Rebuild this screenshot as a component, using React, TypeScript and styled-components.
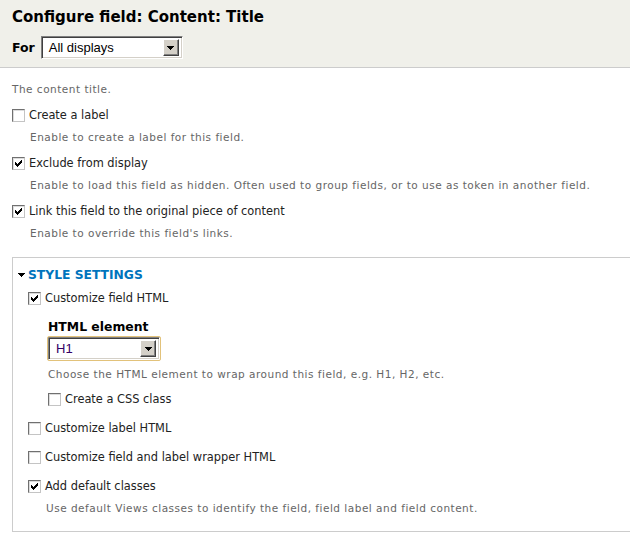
import * as React from "react";
import styled, { createGlobalStyle } from "styled-components";

const GlobalStyle = createGlobalStyle`
  html, body {
    margin: 0;
    padding: 0;
    background: #fff;
    overflow: hidden;
  }
  body {
    font-family: "DejaVu Sans", Verdana, sans-serif;
    color: #222;
  }
`;

const Page = styled.div`
  width: 630px;
  height: 543px;
  overflow: hidden;
`;

const Header = styled.div`
  background: #f0f0ea;
  border-bottom: 1px solid #cccccc;
  padding: 8px 12px 7px;
  height: 52px;
`;

const Title = styled.h1`
  margin: 0;
  font-size: 15px;
  line-height: 18px;
  font-weight: bold;
  color: #000;
`;

const ForRow = styled.div`
  display: flex;
  align-items: center;
  gap: 6px;
  margin-top: 10px;
`;

const ForLabel = styled.span`
  font-size: 12.5px;
  font-weight: bold;
  color: #000;
`;

const SelectBox = styled.div<{ $width: number; $focused?: boolean }>`
  display: flex;
  align-items: center;
  box-sizing: border-box;
  width: ${(p) => p.$width}px;
  height: 23px;
  background: #fff;
  border: 1px solid;
  border-color: #808080 #ffffff #ffffff #808080;
  box-shadow: inset 1px 1px 0 #404040, inset -1px -1px 0 #d4d0c8;
  padding: 2px 3px 2px 2px;
  ${(p) =>
    p.$focused &&
    `
    outline: 1px solid #e2c27a;
    outline-offset: 0;
    border-radius: 1px;
  `}
`;

const SelectValue = styled.span<{ $color?: string }>`
  flex: 1;
  padding-left: 5px;
  font-family: "Liberation Sans", Arial, sans-serif;
  font-size: 13px;
  color: ${(p) => p.$color || "#000"};
  white-space: nowrap;
`;

const SelectButton = styled.span`
  display: flex;
  align-items: center;
  justify-content: center;
  box-sizing: border-box;
  width: 16px;
  height: 17px;
  background: #d4d0c8;
  border: 1px solid;
  border-color: #ffffff #404040 #404040 #ffffff;
  box-shadow: inset -1px -1px 0 #808080;
`;

const Content = styled.div`
  padding: 13px 0 0 12px;
`;

const Intro = styled.div`
  font-size: 10.5px;
  letter-spacing: 0.5px;
  line-height: 16px;
  color: #666;
`;

const FormItem = styled.div<{ $gap?: number }>`
  margin-top: ${(p) => (p.$gap ?? 10)}px;
`;

const CheckRow = styled.label`
  display: flex;
  align-items: center;
  gap: 4px;
  font-size: 11.4px;
  line-height: 16px;
  color: #222;
  white-space: nowrap;
`;

const Box = styled.span`
  display: inline-block;
  box-sizing: border-box;
  width: 13px;
  height: 13px;
  flex: none;
  background: #fff;
  border: 1px solid;
  border-color: #707070 #c4c4c4 #c4c4c4 #707070;
  box-shadow: inset 1px 1px 0 #dcdcdc;
  position: relative;
`;

const Description = styled.div<{ $top?: number }>`
  margin-top: ${(p) => (p.$top ?? 6)}px;
  margin-left: 18px;
  font-size: 10.5px;
  letter-spacing: 0.5px;
  line-height: 16px;
  color: #666;
  white-space: nowrap;
`;

const Fieldset = styled.div`
  margin-top: 16px;
  margin-right: -30px;
  border: 1px solid #cccccc;
  padding: 9px 15px 15px 15px;
`;

const Legend = styled.div`
  display: flex;
  align-items: center;
  gap: 3px;
  margin-left: -10px;
  font-size: 12.3px;
  line-height: 16px;
  font-weight: bold;
  color: #0074bd;
`;

const Nested = styled.div`
  padding-left: 20px;
  margin-top: 13px;
`;

const FieldLabel = styled.div`
  font-size: 12.4px;
  line-height: 16px;
  font-weight: bold;
  color: #000;
  margin-bottom: 2px;
`;

const NestedDescription = styled.div`
  margin-top: 6px;
  font-size: 10.5px;
  letter-spacing: 0.5px;
  line-height: 16px;
  color: #666;
  white-space: nowrap;
`;

const Arrow = () => (
  <svg width="7" height="4" viewBox="0 0 7 4" shapeRendering="crispEdges">
    <path d="M0 0h7v1h-1v1h-1v1h-1v1h-1v-1h-1v-1h-1v-1h-1z" fill="#000" />
  </svg>
);

const Check = () => (
  <svg
    width="7"
    height="7"
    viewBox="0 0 7 7"
    shapeRendering="crispEdges"
    style={{ position: "absolute", left: 2, top: 2 }}
  >
    <rect x="0" y="2" width="1" height="3" fill="#000" />
    <rect x="1" y="3" width="1" height="3" fill="#000" />
    <rect x="2" y="4" width="1" height="3" fill="#000" />
    <rect x="3" y="3" width="1" height="3" fill="#000" />
    <rect x="4" y="2" width="1" height="3" fill="#000" />
    <rect x="5" y="1" width="1" height="3" fill="#000" />
    <rect x="6" y="0" width="1" height="3" fill="#000" />
  </svg>
);

const Checkbox = ({ checked, label }: { checked?: boolean; label: string }) => (
  <CheckRow>
    <Box>{checked && <Check />}</Box>
    <span>{label}</span>
  </CheckRow>
);

const Select = ({
  value,
  width,
  focused,
  color,
}: {
  value: string;
  width: number;
  focused?: boolean;
  color?: string;
}) => (
  <SelectBox $width={width} $focused={focused}>
    <SelectValue $color={color}>{value}</SelectValue>
    <SelectButton>
      <Arrow />
    </SelectButton>
  </SelectBox>
);

const options = [
  {
    label: "Create a label",
    checked: false,
    description: "Enable to create a label for this field.",
  },
  {
    label: "Exclude from display",
    checked: true,
    description:
      "Enable to load this field as hidden. Often used to group fields, or to use as token in another field.",
  },
  {
    label: "Link this field to the original piece of content",
    checked: true,
    description: "Enable to override this field's links.",
  },
];

export default function App() {
  return (
    <Page>
      <GlobalStyle />
      <Header>
        <Title>Configure field: Content: Title</Title>
        <ForRow>
          <ForLabel>For</ForLabel>
          <Select value="All displays" width={142} />
        </ForRow>
      </Header>
      <Content>
        <Intro>The content title.</Intro>
        {options.map((o) => (
          <FormItem key={o.label}>
            <Checkbox checked={o.checked} label={o.label} />
            <Description>{o.description}</Description>
          </FormItem>
        ))}
        <Fieldset>
          <Legend>
            <Arrow />
            <span>STYLE SETTINGS</span>
          </Legend>
          <FormItem $gap={7}>
            <Checkbox checked label="Customize field HTML" />
          </FormItem>
          <Nested>
            <FieldLabel>HTML element</FieldLabel>
            <Select value="H1" width={112} focused color="#330066" />
            <NestedDescription>
              Choose the HTML element to wrap around this field, e.g. H1, H2, etc.
            </NestedDescription>
            <FormItem $gap={9}>
              <Checkbox label="Create a CSS class" />
            </FormItem>
          </Nested>
          <FormItem $gap={13}>
            <Checkbox label="Customize label HTML" />
          </FormItem>
          <FormItem $gap={13}>
            <Checkbox label="Customize field and label wrapper HTML" />
          </FormItem>
          <FormItem $gap={13}>
            <Checkbox checked label="Add default classes" />
            <Description>
              Use default Views classes to identify the field, field label and field content.
            </Description>
          </FormItem>
        </Fieldset>
      </Content>
    </Page>
  );
}
